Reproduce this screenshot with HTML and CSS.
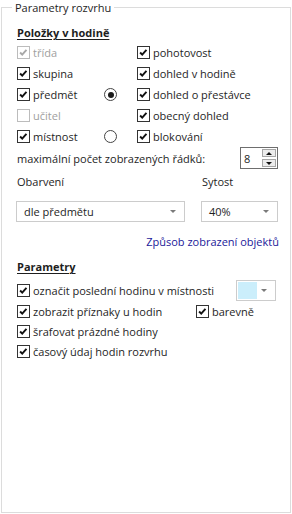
FILE: index.html
```html
<!DOCTYPE html>
<html lang="cs">

<head>
  <meta charset="UTF-8">
  <title>Parametry rozvrhu</title>
  <link rel="stylesheet" href="styles.css">
</head>

<body>
  <fieldset class="panel">
    <legend>Parametry rozvrhu</legend>

    <div class="heading">Položky v hodině</div>

    <div class="items">
      <label class="check off"><span class="box"><svg viewBox="0 0 13 13"><path d="M2.5 6.5 L5 9 L10 3.5"/></svg></span>třída</label>
      <span></span>
      <label class="check"><span class="box"><svg viewBox="0 0 13 13"><path d="M2.5 6.5 L5 9 L10 3.5"/></svg></span>pohotovost</label>

      <label class="check"><span class="box"><svg viewBox="0 0 13 13"><path d="M2.5 6.5 L5 9 L10 3.5"/></svg></span>skupina</label>
      <span></span>
      <label class="check"><span class="box"><svg viewBox="0 0 13 13"><path d="M2.5 6.5 L5 9 L10 3.5"/></svg></span>dohled v hodině</label>

      <label class="check"><span class="box"><svg viewBox="0 0 13 13"><path d="M2.5 6.5 L5 9 L10 3.5"/></svg></span>předmět</label>
      <span class="radio selected"></span>
      <label class="check"><span class="box"><svg viewBox="0 0 13 13"><path d="M2.5 6.5 L5 9 L10 3.5"/></svg></span>dohled o přestávce</label>

      <label class="check off"><span class="box empty"></span>učitel</label>
      <span></span>
      <label class="check"><span class="box"><svg viewBox="0 0 13 13"><path d="M2.5 6.5 L5 9 L10 3.5"/></svg></span>obecný dohled</label>

      <label class="check"><span class="box"><svg viewBox="0 0 13 13"><path d="M2.5 6.5 L5 9 L10 3.5"/></svg></span>místnost</label>
      <span class="radio"></span>
      <label class="check"><span class="box"><svg viewBox="0 0 13 13"><path d="M2.5 6.5 L5 9 L10 3.5"/></svg></span>blokování</label>
    </div>

    <div class="max-row">
      <span>maximální počet zobrazených řádků:</span>
      <div class="spinner">
        <span class="value">8</span>
        <div class="spin-buttons">
          <span class="spin up"></span>
          <span class="spin down"></span>
        </div>
      </div>
    </div>

    <div class="colors">
      <span>Obarvení</span>
      <span>Sytost</span>
      <div class="select">dle předmětu<span class="arrow"></span></div>
      <div class="select">40%<span class="arrow"></span></div>
    </div>

    <div class="link-row"><a href="#">Způsob zobrazení objektů</a></div>

    <div class="heading second">Parametry</div>

    <div class="params">
      <div class="param-row first">
        <label class="check"><span class="box"><svg viewBox="0 0 13 13"><path d="M2.5 6.5 L5 9 L10 3.5"/></svg></span>označit poslední hodinu v místnosti</label>
        <div class="color-pick"><span class="swatch"></span><span class="arrow"></span></div>
      </div>
      <div class="param-row">
        <label class="check wide"><span class="box"><svg viewBox="0 0 13 13"><path d="M2.5 6.5 L5 9 L10 3.5"/></svg></span>zobrazit příznaky u hodin</label>
        <label class="check"><span class="box"><svg viewBox="0 0 13 13"><path d="M2.5 6.5 L5 9 L10 3.5"/></svg></span>barevně</label>
      </div>
      <div class="param-row">
        <label class="check"><span class="box"><svg viewBox="0 0 13 13"><path d="M2.5 6.5 L5 9 L10 3.5"/></svg></span>šrafovat prázdné hodiny</label>
      </div>
      <div class="param-row">
        <label class="check"><span class="box"><svg viewBox="0 0 13 13"><path d="M2.5 6.5 L5 9 L10 3.5"/></svg></span>časový údaj hodin rozvrhu</label>
      </div>
    </div>
  </fieldset>
</body>

</html>
```

FILE: styles.css
```css
* {
  box-sizing: border-box;
}

body {
  margin: 0;
  font-family: "Open Sans", "Noto Sans", sans-serif;
  font-size: 11px;
  line-height: 15px;
  color: #1e1e1e;
  background: #fff;
}

.panel {
  margin: 0 1px;
  height: 513px;
  min-width: 0;
  border: 1px solid #dcdcdc;
  padding: 0 12px 0 15px;
}

.panel legend {
  margin-left: -5px;
  padding: 0 3px;
  line-height: 15px;
}

.heading {
  margin-top: 10px;
  font-weight: 700;
  text-decoration: underline;
  text-underline-offset: 2px;
}

.heading.second {
  margin-top: 10px;
}

.items {
  display: grid;
  grid-template-columns: 84px 36px 1fr;
  grid-auto-rows: 21px;
  align-items: center;
  margin-top: 2px;
}

.check {
  display: flex;
  align-items: center;
  gap: 3px;
  white-space: nowrap;
}

.check .box {
  width: 13px;
  height: 13px;
  flex: none;
  border: 1px solid #333;
  background: #fff;
  display: flex;
}

.check .box svg {
  width: 11px;
  height: 11px;
}

.check .box path {
  fill: none;
  stroke: #111;
  stroke-width: 2.3;
}

.check.off {
  color: #a0a0a0;
}

.check.off .box {
  border-color: #bcbcbc;
}

.check.off .box path {
  stroke: #a8a8a8;
}

.radio {
  justify-self: start;
  margin-left: 3px;
  width: 13px;
  height: 13px;
  border: 1px solid #444;
  border-radius: 50%;
  display: flex;
  align-items: center;
  justify-content: center;
}

.radio.selected::after {
  content: "";
  width: 6px;
  height: 6px;
  border-radius: 50%;
  background: #1a1a1a;
}

.max-row {
  display: flex;
  align-items: center;
  justify-content: space-between;
  height: 22px;
}

.spinner {
  width: 38px;
  height: 22px;
  border: 1px solid #6e6e6e;
  display: flex;
  align-items: center;
  justify-content: space-between;
  padding: 0 1px 0 3px;
}

.spin-buttons {
  display: flex;
  flex-direction: column;
  gap: 2px;
}

.spin {
  width: 14px;
  height: 8px;
  border: 1px solid #a6a6a6;
  background: #ececec;
  display: flex;
  align-items: center;
  justify-content: center;
}

.spin::after {
  content: "";
  border-left: 3px solid transparent;
  border-right: 3px solid transparent;
}

.spin.up::after {
  border-bottom: 3px solid #111;
}

.spin.down::after {
  border-top: 3px solid #111;
}

.colors {
  display: grid;
  grid-template-columns: 1fr 77px;
  column-gap: 16px;
  row-gap: 12px;
  margin-top: 5px;
  margin-left: -1px;
}

.colors > span {
  padding-left: 1px;
}

.select {
  position: relative;
  height: 21px;
  border: 1px solid #cccccc;
  padding-left: 7px;
  display: flex;
  align-items: center;
}

.arrow {
  position: absolute;
  right: 8px;
  top: 8px;
  border-left: 3px solid transparent;
  border-right: 3px solid transparent;
  border-top: 3px solid #7a7a7a;
}

.link-row {
  margin-top: 12px;
  text-align: right;
  margin-right: -1px;
}

.link-row a {
  color: #22199a;
  text-decoration: none;
}

.params {
  margin-top: 6px;
}

.param-row {
  display: flex;
  align-items: center;
  height: 20px;
}

.param-row.first {
  height: 21px;
  justify-content: space-between;
}

.check.wide {
  width: 179px;
}

.color-pick {
  position: relative;
  width: 40px;
  height: 21px;
  margin-right: 2px;
  border: 1px solid #cccccc;
  padding: 1px;
}

.swatch {
  display: block;
  width: 19px;
  height: 17px;
  background: #cbeefb;
}
```
